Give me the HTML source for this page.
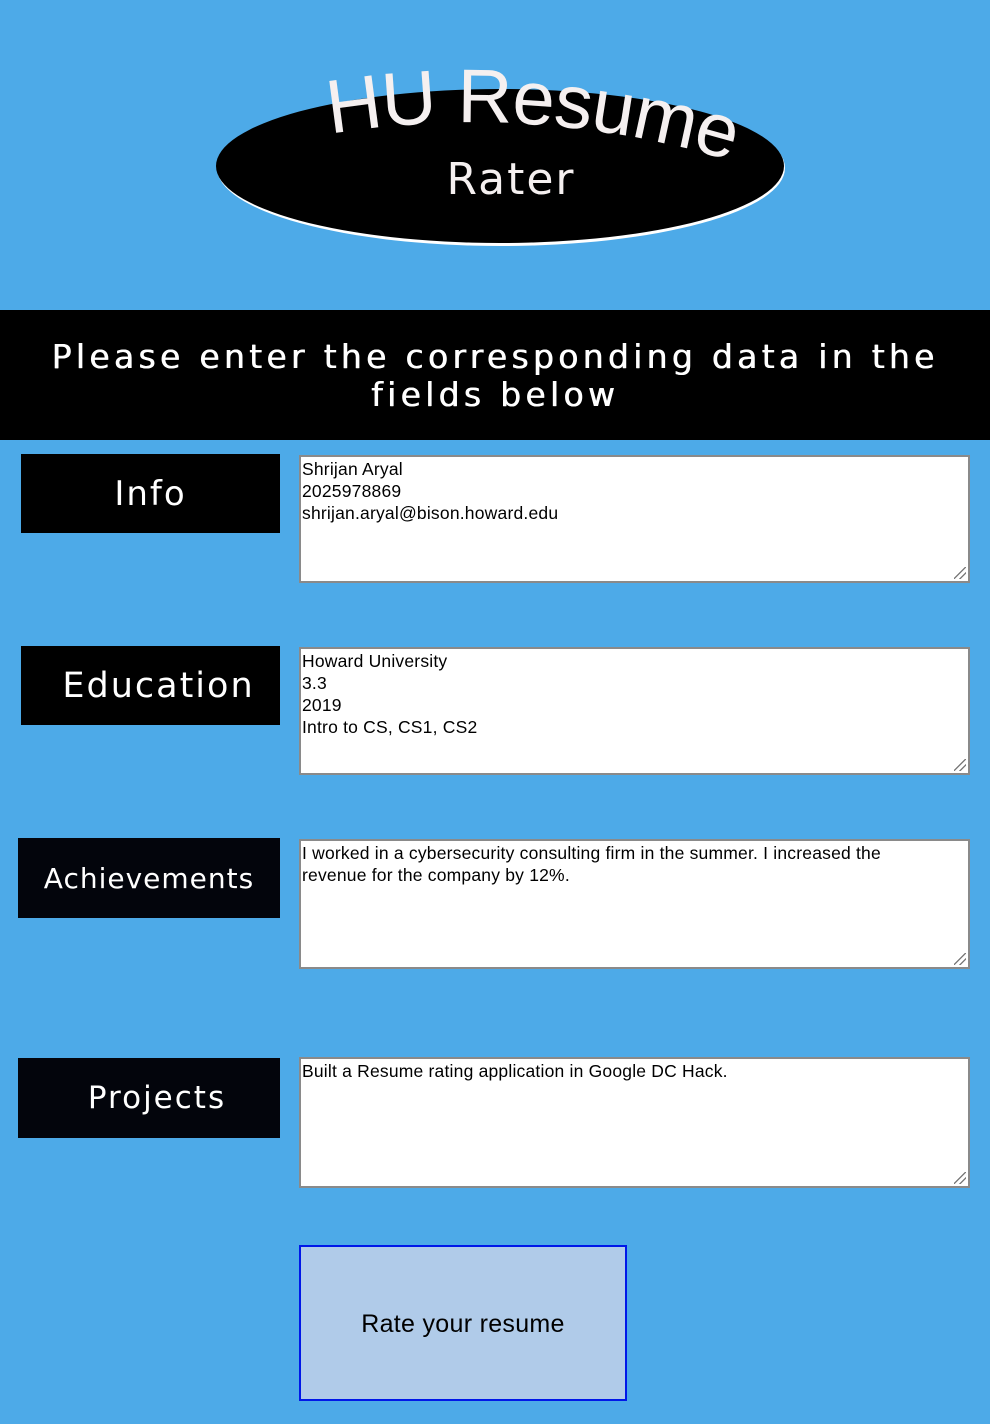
<!DOCTYPE html>
<html><head><style>
body{margin:0;width:990px;height:1424px;background:#4daae8;position:relative;overflow:hidden;font-family:"Liberation Sans",sans-serif}
.a{position:absolute}
.lab{position:absolute;background:#000;color:#fff;display:flex;align-items:center;justify-content:center;font-size:33px;letter-spacing:2px;font-family:"DejaVu Sans","Liberation Sans",sans-serif}
.ta{position:absolute;background:#fff;border:2px solid #8a8a8a;box-sizing:border-box;font-size:17.5px;letter-spacing:0.2px;line-height:22px;padding:1px 1px;color:#000}
.ta:after{content:"";position:absolute;right:2px;bottom:2px;width:12px;height:12px;background:linear-gradient(135deg,transparent 45%,#777 46%,#777 52%,transparent 53%,transparent 70%,#777 71%,#777 77%,transparent 78%)}
</style></head><body>
<svg class="a" style="left:0;top:0" width="990" height="300">
<ellipse cx="501" cy="168" rx="284" ry="78" fill="#fff"/>
<ellipse cx="500" cy="166" rx="284" ry="77" fill="#000"/>
<defs><path id="c" d="M330 134 Q540 100 745 165"/></defs>
<text font-family="Liberation Sans,sans-serif" font-size="76" fill="#f5f0f0" letter-spacing="-1"><textPath href="#c">HU Resume</textPath></text>
<text x="511" y="194" text-anchor="middle" font-family="DejaVu Sans,sans-serif" font-size="44" fill="#f5f0f0" letter-spacing="2">Rater</text>
</svg>
<div class="a" style="left:0;top:310px;width:990px;height:130px;background:#000;color:#fff;text-align:center;font-family:'DejaVu Sans',sans-serif;font-size:33px;line-height:38px;letter-spacing:4.3px;box-sizing:border-box;padding-top:28px;text-shadow:0.6px 0 0 #fff">Please enter the corresponding data in the<br>fields below</div>
<div class="lab" style="left:21px;top:454px;width:259px;height:79px;font-size:34px">Info</div>
<div class="lab" style="left:21px;top:646px;width:259px;height:79px;font-size:35px;padding-left:16px;box-sizing:border-box">Education</div>
<div class="lab" style="left:18px;top:838px;width:262px;height:80px;font-size:28px;letter-spacing:1px;background:#03050c">Achievements</div>
<div class="lab" style="left:18px;top:1058px;width:262px;height:80px;font-size:31px;background:#03050c;padding-left:16px;box-sizing:border-box">Projects</div>
<div class="ta" style="left:299px;top:455px;width:671px;height:128px">Shrijan Aryal<br>2025978869<br>shrijan.aryal@bison.howard.edu</div>
<div class="ta" style="left:299px;top:647px;width:671px;height:128px">Howard University<br>3.3<br>2019<br>Intro to CS, CS1, CS2</div>
<div class="ta" style="left:299px;top:839px;width:671px;height:130px">I worked in a cybersecurity consulting firm in the summer. I increased the<br>revenue for the company by 12%.</div>
<div class="ta" style="left:299px;top:1057px;width:671px;height:131px">Built a Resume rating application in Google DC Hack.</div>
<div class="a" style="left:299px;top:1245px;width:328px;height:156px;box-sizing:border-box;border:2px solid #0018e8;background:#b0cbe9;display:flex;align-items:center;justify-content:center;font-size:25px;letter-spacing:0.3px;color:#000;padding-top:2px">Rate your resume</div>
</body></html>
